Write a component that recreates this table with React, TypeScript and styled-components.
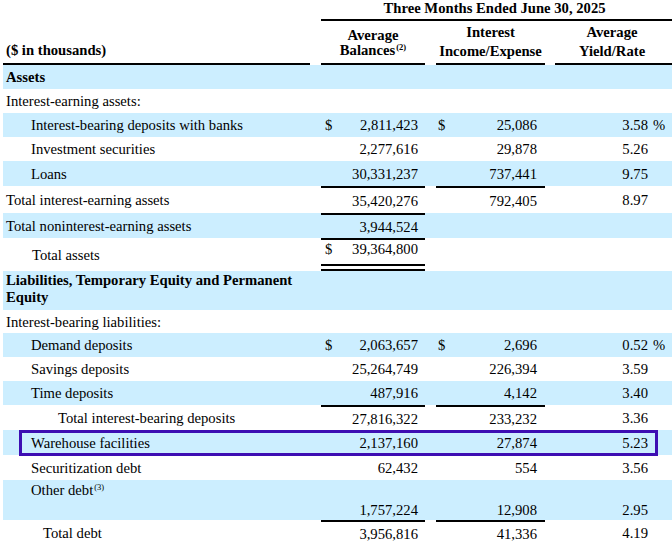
import React from 'react';
import styled, { createGlobalStyle } from 'styled-components';

const GlobalStyle = createGlobalStyle`
    html, body {
        margin: 0;
        padding: 0;
        background: #ffffff;
    }
    body {
        font-family: 'Liberation Serif', 'Times New Roman', serif;
        color: #000000;
        font-size: 14.667px;
    }
`;

const SHADE = '#cceeff';
const INK = '#000000';

type RowData = {
    label: string;
    sup?: string;
    indent: number;
    h: number;
    bold?: boolean;
    shade?: boolean;
    bal?: string;
    balSign?: boolean;
    inc?: string;
    incSign?: boolean;
    rate?: string;
    pct?: boolean;
    balRule?: boolean;
    incRule?: boolean;
    double?: boolean;
    numTop?: boolean;
    labelTop?: boolean;
    split?: boolean;
    highlight?: boolean;
};

const rows: RowData[] = [
    { label: 'Assets', bold: true, indent: 3, h: 24, shade: true },
    { label: 'Interest-earning assets:', indent: 3, h: 24 },
    {
        label: 'Interest-bearing deposits with banks',
        indent: 28,
        h: 24,
        shade: true,
        bal: '2,811,423',
        balSign: true,
        inc: '25,086',
        incSign: true,
        rate: '3.58',
        pct: true,
    },
    { label: 'Investment securities', indent: 28, h: 24, bal: '2,277,616', inc: '29,878', rate: '5.26' },
    { label: 'Loans', indent: 28, h: 25, shade: true, bal: '30,331,237', inc: '737,441', rate: '9.75' },
    {
        label: 'Total interest-earning assets',
        indent: 3,
        h: 27,
        bal: '35,420,276',
        inc: '792,405',
        rate: '8.97',
        balRule: true,
        incRule: true,
    },
    { label: 'Total noninterest-earning assets', indent: 3, h: 25, shade: true, bal: '3,944,524', balRule: true },
    {
        label: 'Total assets',
        indent: 29,
        h: 33,
        bal: '39,364,800',
        balSign: true,
        balRule: true,
        double: true,
        numTop: true,
    },
    {
        label: 'Liabilities, Temporary Equity and Permanent Equity',
        bold: true,
        indent: 3,
        h: 39,
        shade: true,
        labelTop: true,
    },
    { label: 'Interest-bearing liabilities:', indent: 3, h: 23 },
    {
        label: 'Demand deposits',
        indent: 28,
        h: 24,
        shade: true,
        bal: '2,063,657',
        balSign: true,
        inc: '2,696',
        incSign: true,
        rate: '0.52',
        pct: true,
    },
    { label: 'Savings deposits', indent: 28, h: 24, bal: '25,264,749', inc: '226,394', rate: '3.59' },
    { label: 'Time deposits', indent: 28, h: 24, shade: true, bal: '487,916', inc: '4,142', rate: '3.40' },
    {
        label: 'Total interest-bearing deposits',
        indent: 55,
        h: 25,
        bal: '27,816,322',
        inc: '233,232',
        rate: '3.36',
        balRule: true,
        incRule: true,
    },
    {
        label: 'Warehouse facilities',
        indent: 28,
        h: 25,
        shade: true,
        bal: '2,137,160',
        inc: '27,874',
        rate: '5.23',
        highlight: true,
    },
    { label: 'Securitization debt', indent: 28, h: 25, bal: '62,432', inc: '554', rate: '3.56' },
    {
        label: 'Other debt',
        sup: '(3)',
        indent: 28,
        h: 40,
        shade: true,
        bal: '1,757,224',
        inc: '12,908',
        rate: '2.95',
        split: true,
    },
    {
        label: 'Total debt',
        indent: 40,
        h: 26,
        bal: '3,956,816',
        inc: '41,336',
        rate: '4.19',
        balRule: true,
        incRule: true,
    },
];

const Page = styled.div`
    width: 672px;
    height: 546px;
    overflow: hidden;
`;

const Table = styled.table`
    margin-left: 3px;
    width: 673px;
    table-layout: fixed;
    border-collapse: separate;
    border-spacing: 0;
    font-size: 14.667px;
`;

const Row = styled.tr<{ $h: number; $shade?: boolean }>`
    height: ${(p) => p.$h}px;
    background: ${(p) => (p.$shade ? SHADE : 'transparent')};
`;

const Gap = styled.td`
    padding: 0;
`;

const Label = styled.td<{ $indent: number; $bold?: boolean; $top?: boolean; $mark?: boolean }>`
    position: ${(p) => (p.$mark ? 'relative' : 'static')};
    padding: ${(p) => (p.$top ? '1px' : '0')} 0 0 ${(p) => p.$indent}px;
    font-weight: ${(p) => (p.$bold ? 700 : 400)};
    line-height: ${(p) => (p.$bold ? '17px' : '18px')};
    vertical-align: ${(p) => (p.$top ? 'top' : 'middle')};
`;

// figure cells carry the rules drawn over subtotals; the grand total gets a
// double rule: the cell's own bottom border plus a painted line 3px above it
const Figure = styled.td<{
    $padL?: number;
    $padR?: number;
    $right?: boolean;
    $rule?: boolean;
    $double?: boolean;
    $valign: string;
}>`
    padding: 0 ${(p) => p.$padR ?? 0}px ${(p) => (p.$valign === 'bottom' ? 1 : 0)}px ${(p) => p.$padL ?? 0}px;
    text-align: ${(p) => (p.$right ? 'right' : 'left')};
    line-height: 18px;
    white-space: nowrap;
    vertical-align: ${(p) => p.$valign};
    border-top: ${(p) => (p.$rule ? `2px solid ${INK}` : '0 none')};
    border-bottom: ${(p) => (p.$double ? `2px solid ${INK}` : '0 none')};
    background-image: ${(p) => (p.$double ? `linear-gradient(${INK}, ${INK})` : 'none')};
    background-repeat: no-repeat;
    background-size: 100% 2px;
    background-position: left 0 bottom 3px;
    background-origin: padding-box;
    background-clip: padding-box;
`;

const Sup = styled.span<{ $bold?: boolean }>`
    position: relative;
    top: -5px;
    font-size: 8.5px;
    line-height: 0;
    font-weight: ${(p) => (p.$bold ? 700 : 400)};
    margin-left: 1px;
`;

const Highlight = styled.span`
    position: absolute;
    left: 16px;
    top: 0;
    width: 639px;
    height: 26px;
    box-sizing: border-box;
    border: 3px solid #3d0eb3;
    z-index: 1;
    pointer-events: none;
`;

const PeriodHead = styled.th`
    padding: 0 8px 0 0;
    font-weight: 700;
    line-height: 17px;
    text-align: center;
    vertical-align: top;
    border-bottom: 2px solid ${INK};
    white-space: nowrap;
`;

const ColHead = styled.th<{ $lh: number; $pb: number; $pr?: number }>`
    padding: 0 ${(p) => p.$pr ?? 0}px ${(p) => p.$pb}px 0;
    font-weight: 700;
    line-height: ${(p) => p.$lh}px;
    text-align: center;
    vertical-align: bottom;
    border-bottom: 2px solid ${INK};
    white-space: nowrap;
`;

const UnitHead = styled.th`
    padding: 0 0 4px 3px;
    font-weight: 700;
    line-height: 17px;
    text-align: left;
    vertical-align: bottom;
    border-bottom: 2px solid ${INK};
`;

const BlankHead = styled.th`
    padding: 0;
`;

const BodyRow = ({ r }: { r: RowData }) => {
    const v = r.split ? 'bottom' : r.numTop ? 'top' : 'middle';
    return (
        <Row $h={r.h} $shade={r.shade}>
            <Label $indent={r.indent} $bold={r.bold} $top={r.labelTop || r.split} $mark={r.highlight}>
                {r.label}
                {r.sup && <Sup>{r.sup}</Sup>}
                {r.highlight && <Highlight />}
            </Label>
            <Gap />
            <Figure $padL={4} $rule={r.balRule} $double={r.double} $valign={v}>
                {r.balSign ? '$' : ''}
            </Figure>
            <Figure $right $padR={7} $rule={r.balRule} $double={r.double} $valign={v}>
                {r.bal ?? ''}
            </Figure>
            <Gap />
            <Figure $padL={2} $rule={r.incRule} $valign={v}>
                {r.incSign ? '$' : ''}
            </Figure>
            <Figure $right $padR={8} $rule={r.incRule} $valign={v}>
                {r.inc ?? ''}
            </Figure>
            <Gap />
            <Figure $right $padR={3} $valign={v}>
                {r.rate ?? ''}
            </Figure>
            <Figure $padL={2} $valign={v}>
                {r.pct ? '%' : ''}
            </Figure>
        </Row>
    );
};

const App = () => {
    return (
        <Page>
            <GlobalStyle />
            <Table>
                <colgroup>
                    <col style={{ width: 307 }} />
                    <col style={{ width: 11 }} />
                    <col style={{ width: 14 }} />
                    <col style={{ width: 90 }} />
                    <col style={{ width: 11 }} />
                    <col style={{ width: 14 }} />
                    <col style={{ width: 95 }} />
                    <col style={{ width: 10 }} />
                    <col style={{ width: 96 }} />
                    <col style={{ width: 25 }} />
                </colgroup>
                <thead>
                    <Row $h={21}>
                        <BlankHead />
                        <BlankHead />
                        <PeriodHead colSpan={8}>Three Months Ended June 30, 2025</PeriodHead>
                    </Row>
                    <Row $h={44}>
                        <UnitHead>($ in thousands)</UnitHead>
                        <BlankHead />
                        <ColHead colSpan={2} $lh={15} $pb={5}>
                            Average
                            <br />
                            Balances<Sup $bold>(2)</Sup>
                        </ColHead>
                        <BlankHead />
                        <ColHead colSpan={2} $lh={19} $pb={2}>
                            Interest
                            <br />
                            Income/Expense
                        </ColHead>
                        <BlankHead />
                        <ColHead colSpan={2} $lh={19} $pb={2} $pr={7}>
                            Average
                            <br />
                            Yield/Rate
                        </ColHead>
                    </Row>
                </thead>
                <tbody>
                    {rows.map((r) => (
                        <BodyRow key={r.label} r={r} />
                    ))}
                </tbody>
            </Table>
        </Page>
    );
};

export default App;
